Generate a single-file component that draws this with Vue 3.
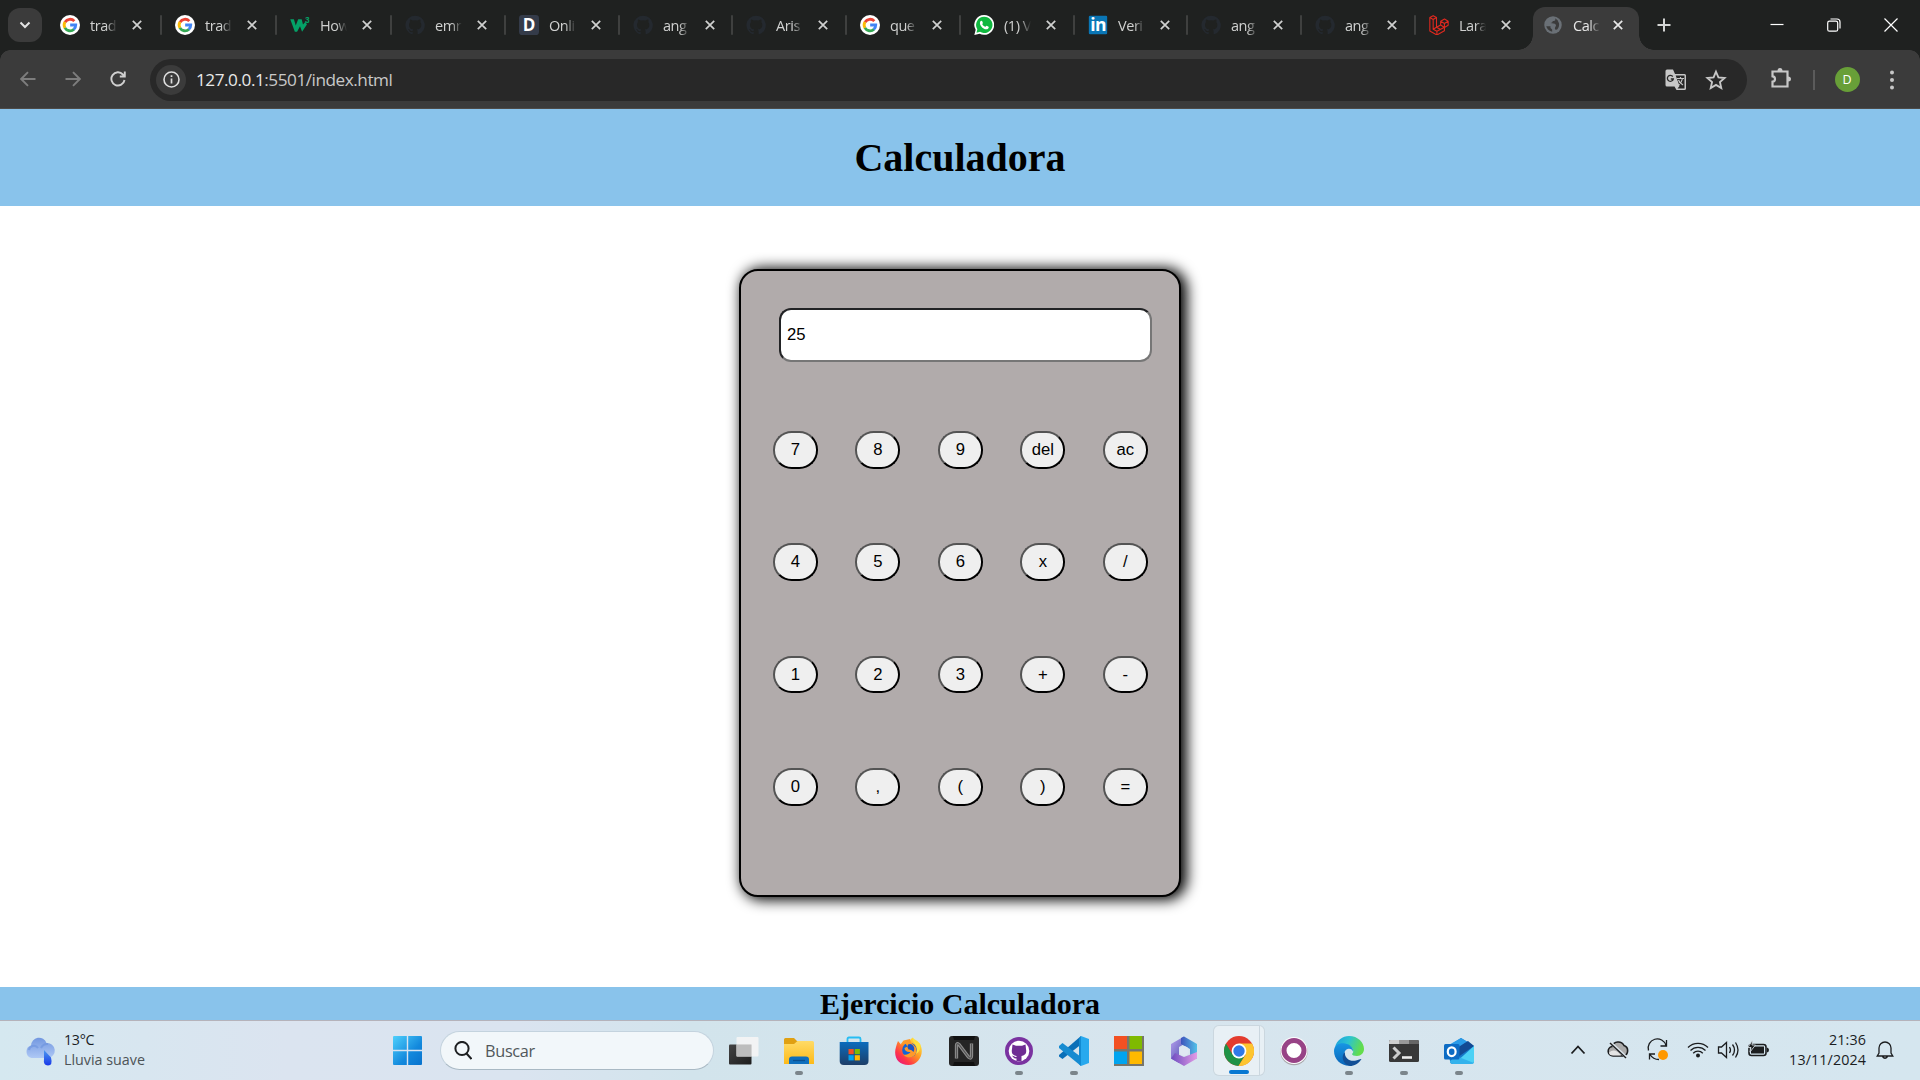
<script setup>
const g = `<circle cx="12" cy="12" r="12" fill="#fff"/><g fill="none" stroke-width="3.4"><path d="M17.2 7.4A7 7 0 0 0 6 8.6" stroke="#ea4335"/><path d="M6 8.4a7 7 0 0 0 0 7.2" stroke="#fbbc05"/><path d="M5.9 15.4a7 7 0 0 0 10.9 1.7" stroke="#34a853"/><path d="M12.2 12h6.7a7 7 0 0 1-2.4 5.3" stroke="#4285f4"/></g>`
const gh = `<path fill="#24292f" d="M12 .8a11.5 11.5 0 0 0-3.6 22.4c.6.1.8-.2.8-.6v-2.1c-3.2.7-3.9-1.4-3.9-1.4-.5-1.3-1.3-1.7-1.3-1.7-1-.7.1-.7.1-.7 1.2.1 1.8 1.2 1.8 1.2 1 1.8 2.7 1.3 3.4 1 .1-.8.4-1.3.7-1.6-2.5-.3-5.2-1.3-5.2-5.7 0-1.3.5-2.3 1.2-3.1-.1-.3-.5-1.5.1-3.1 0 0 1-.3 3.2 1.2a11 11 0 0 1 5.8 0c2.2-1.5 3.2-1.2 3.2-1.2.6 1.6.2 2.8.1 3.1.7.8 1.2 1.8 1.2 3.1 0 4.4-2.7 5.4-5.3 5.7.4.4.8 1.1.8 2.1v3.2c0 .4.2.7.8.6A11.5 11.5 0 0 0 12 .8z"/>`
const icons = {
  google: g,
  github: gh,
  w3: `<path d="M.3 5h4.400l2.200 7.500L9.800 5h4.200l1.600 6.500L18.500 8l1.800 3.500-5.800 8.500-2.500-6.500L8.500 20H5.800z" fill="#04a167"/><text x="18" y="9.500" font-size="10" font-weight="700" fill="#04a167" font-family="Liberation Sans, sans-serif">3</text>`,
  doc: `<rect width="24" height="24" rx="4" fill="#343b49"/><text x="12" y="19.3" font-size="20.5" font-weight="700" text-anchor="middle" fill="#fff" font-family="Open Sans, sans-serif">D</text>`,
  whatsapp: `<path d="M12.2 0A11.8 11.8 0 0 0 2 17.8L.4 24l6.3-1.6A11.9 11.9 0 1 0 12.2 0z" fill="#fff"/><path d="M12.2 2.2A9.7 9.7 0 0 0 4 17l-1 4.2 4.3-1.1A9.7 9.7 0 1 0 12.2 2.2z" fill="#10b83f"/><path d="M7.5 7.7c1-1.6 2.2-.8 2.4-.2l.7 1.8c.2.8-.9 1.4-.7 1.9a7 7 0 0 0 3.4 3c.7.2 1.3-1.5 2-1.2l2.2 1.1c.5.4.1 2.3-1.5 2.9-4.2 1.5-10.7-5.3-8.5-9.3z" fill="#fff"/>`,
  linkedin: `<rect x="1" y="1" width="22" height="22" rx="1.5" fill="#0a76b5"/><text x="12" y="19.3" font-size="21" font-weight="700" text-anchor="middle" fill="#fff" font-family="Open Sans, sans-serif" letter-spacing="-.8">in</text>`,
  laravel: `<path d="M1 3l4-2.2L9 3v11.8l5-2.8V7.5l4.6-2.7L23 7.4v5l-4.5 2.6v4L9.5 24 1 19.2zM1 3l4 2.4L9 3M5 5.4v11.8l4.5 2.4 9-4.9M14 7.5l4.5 2.6L23 7.4M18.5 10.1V15L14 12M5 17.2l4-2.4M9.5 19.6V24M14 12l-5 2.8 5 2.7" fill="none" stroke="#e1291f" stroke-width="1.3" stroke-linejoin="round"/>`,
  globe: `<circle cx="12" cy="12" r="10.5" fill="#6a7076"/><path d="M3.7 11.5A8.5 8.5 0 0 0 11 20v-2.5l-2-2v-2H4zM14.5 3.9c1 2.6-.2 3.4-2.8 3.4-.2 2-1.3 1.8-2.6 2.2 2 .7 5.2.1 6.3 2.1.8 1.5-1.2 2.6-1.1 4.8.3 1.3 1.8 1.4 3 .8A8.5 8.5 0 0 0 14.5 4z" fill="#3b3b3b"/>`,
}
const tabs = [
  ['google', 'trad', 115], ['google', 'trad', 115], ['w3', 'How', 115], ['github', 'emr', 114], ['doc', 'Onli', 114],
  ['github', 'ang', 113], ['github', 'Aris', 114], ['google', 'que', 114], ['whatsapp', '(1) V', 114], ['linkedin', 'Veri', 113],
  ['github', 'ang', 114], ['github', 'ang', 114], ['laravel', 'Lara', 117],
]
const keys = ['7', '8', '9', 'del', 'ac', '4', '5', '6', 'x', '/', '1', '2', '3', '+', '-', '0', ',', '(', ')', '=']
const apps = [
  { svg: `<defs><linearGradient id="tv" x2="1" y2="1"><stop stop-color="#444"/><stop offset="1" stop-color="#1d1d1d"/></linearGradient></defs><rect y="8.5" width="22.5" height="20" rx="1" fill="url(#tv)"/><rect x="7.5" y="1" width="22" height="19.5" rx="1" fill="#f4f4f4" opacity=".93"/><rect x="7.5" y="8.5" width="15" height="12" fill="#bdbdbd"/>` },
  { dot: 1, svg: `<defs><linearGradient id="fe" x2="0" y2="1"><stop stop-color="#ffdb67"/><stop offset="1" stop-color="#fdba18"/></linearGradient></defs><path d="M0 3.5Q0 2 1.500 2H10l3 3h15v6H0z" fill="#e0a012"/><path d="M0 8h10l3.500-3H28.500Q30 5 30 6.500V28H0z" fill="url(#fe)"/><path d="M5 28v-4.500q0-3 3-3h14q3 0 3 3V28z" fill="#0f6fbd"/><path d="M9 24.500h12" stroke="#0a4f90" stroke-width="1.300"/>` },
  { svg: `<defs><linearGradient id="st" x2="0" y2="1"><stop stop-color="#0b6cbd"/><stop offset="1" stop-color="#1d3e68"/></linearGradient></defs><path d="M8.500 6V3q0-1.500 1.500-1.500h10q1.500 0 1.500 1.500v3" fill="none" stroke="#27bdf3" stroke-width="1.800"/><path d="M.7 6h28.800v19q0 4-4 4H4.700q-4 0-4-4z" fill="url(#st)"/><path d="M9.500 13h5.200v5.200H9.500z" fill="#f25022"/><path d="M15.700 13h5.200v5.200h-5.200z" fill="#7fba00"/><path d="M9.500 19.200h5.200v5.200H9.500z" fill="#00a4ef"/><path d="M15.700 19.200h5.200v5.200h-5.200z" fill="#ffb900"/>` },
  { svg: `<defs><linearGradient id="ff" x1="1" x2=".1" y2="1"><stop offset=".1" stop-color="#fff044"/><stop offset=".45" stop-color="#ff9722"/><stop offset=".75" stop-color="#ff3647"/><stop offset="1" stop-color="#e31587"/></linearGradient></defs><path d="M4 5l3 3.500C9 6 12 4.500 15 5l3.500-3.500C20 4 24 4 26 8c5 9-1 21-11.500 21S-1 21 2 11c.5-2 1.200-4 2-6z" fill="url(#ff)"/><circle cx="15.500" cy="14" r="7.300" fill="#1265d8"/><path d="M16 3c0 5 7 6 6.500 12-1 7-9 8.500-13.500 3.500 4 1 6.500-1 7.500-2.500-3 .5-6-1-6-4l3-1.500-2-3-5 1 3-4z" fill="#ff9a2a"/><path d="M14 8.500q3-1 4.500.5 3 3 1 7-2-3-5-2.500-2-2.500-.5-5z" fill="#1a54c4"/><path d="M19 1.500c-1.500 4 3.500 6.500 4 11 .2 2-.3 4-1 5.500 4-2 5-7 4-10.500-1.300 0-5.500-1-7-6z" fill="#ffe23d"/>` },
  { svg: `<rect width="30" height="30" rx="3" fill="#252525"/><path d="M4 0h22l-1 4H5zM4 30h22l-1-4H5z" fill="#111"/><path d="M7.500 22.500V9.500q0-3 2.500-1l9.500 12.500q3 2.500 3-1V7.500" fill="none" stroke="#8f8f8f" stroke-width="3.300"/><path d="M7.500 22.500V9.500q0-3 2.500-1l9.500 12.500q3 2.500 3-1V7.500" fill="none" stroke="#555" stroke-width="1.200"/>` },
  { dot: 1, svg: `<circle cx="15" cy="15" r="14" fill="#7a32a0"/><circle cx="15" cy="15" r="10.300" fill="#fff"/><path d="M8.500 8.500l3.500 1.300h6l3.500-1.300.5 4.500c1 5-1.500 6.500-4.500 7V25h-5v-2.500c-3 .5-3-2-4.500-2.500 1.500-.7 2.500 1.500 4.500 1V20c-3-.5-5.500-2-4.500-7z" fill="#6f2c93"/>` },
  { dot: 1, svg: `<path d="M22 0l8 3v24l-8 3z" fill="#28a9ee"/><path d="M22 0v8.500L3.500 23 0 20.500v-1.500z" fill="#0a6fb8"/><path d="M0 10l3.500-3L22 21v9L0 12z" fill="#168bd1"/><path d="M22 0v30l-2-2V3z" fill="#128bd3"/>` },
  { svg: `<rect width="30" height="30" fill="#77756a"/><path d="M0 0h13v13H0z" fill="#f25022"/><path d="M15.500 0H28v13H15.500z" fill="#7fba00"/><path d="M0 15.500h13V28H0z" fill="#00a4ef"/><path d="M15.500 15.500H28V28H15.500z" fill="#ffb900"/>` },
  { svg: `<defs><linearGradient id="mA" x2="1" y2="1"><stop stop-color="#b9a2ef"/><stop offset="1" stop-color="#4046a8"/></linearGradient><linearGradient id="mB" x2="1"><stop stop-color="#3e53bd"/><stop offset="1" stop-color="#54c1e8"/></linearGradient><linearGradient id="mC" x2="1"><stop stop-color="#6d4cc0"/><stop offset="1" stop-color="#e39be6"/></linearGradient></defs><path d="M15 .5L2 8v14.500l8 4.500v-16l8-4.500z" fill="url(#mA)"/><path d="M12 2l3-1.500L28 8v15l-7-4v-6l-9-5z" fill="url(#mB)"/><path d="M28 16v6.500L15 30 2 22.500 6 17l9 4z" fill="url(#mC)"/><circle cx="15" cy="15" r="4.800" fill="#e0e7f2"/>` },
  { active: 1, svg: `<circle cx="15" cy="15" r="15" fill="#e33b2e"/><path d="M2 7.500A15 15 0 0 0 14.500 30l7-11.500-6.500-3.500-6.500 3.500z" fill="#1f9246"/><path d="M28 7.500H15L21.500 18.700 14.500 30A15 15 0 0 0 28 7.500z" fill="#fdc52f"/><circle cx="15" cy="15" r="7.400" fill="#fff"/><circle cx="15" cy="15" r="5.700" fill="#3079e8"/>` },
  { svg: `<circle cx="15" cy="15.500" r="13.700" fill="#a9a7ab"/><circle cx="15" cy="14.500" r="13.500" fill="#fff"/><circle cx="15" cy="14.500" r="10" fill="#fff" stroke="#984386" stroke-width="5"/>` },
  { dot: 1, svg: `<defs><linearGradient id="eA" x2="1" y2=".3"><stop stop-color="#1a9de0"/><stop offset=".5" stop-color="#2cc3d0"/><stop offset="1" stop-color="#63dd4c"/></linearGradient><linearGradient id="eB" x2="0" y2="1"><stop stop-color="#1796e4"/><stop offset="1" stop-color="#0a64b8"/></linearGradient></defs><path d="M1 11C3 4 8.500 0 15 0c9 0 15 6.500 15 13 0 4-3 7-7 7-3 0-5-1-5-2 1-1 1.500-2 1-4C18 9 8 7 1 11z" fill="url(#eA)"/><path d="M0 15C0 9 6 6.500 11 7.500c6 1 8.500 5 8 8-.5-2-3-3.500-5.500-2.500-5 2-5 11 4.500 16.500C8 31 0 24 0 15z" fill="url(#eB)"/><path d="M11 16c-1 6 5 10 11 8.500 3-.7 4.500-2 5.500-1.500C25 27.500 20 30 16 30 8 28 7 19 11 16z" fill="#124f96"/>` },
  { dot: 1, svg: `<rect y="4" width="30" height="22" rx="1.500" fill="#383838"/><path d="M0 8V5.500Q0 4 1.500 4H10v4z" fill="#ccc"/><path d="M10 4h10v4H10z" fill="#999"/><path d="M20 4h8.500Q30 4 30 5.500V8H20z" fill="#666"/><path d="M4.500 11.500l5.500 5.500-5.500 5.500" fill="none" stroke="#ccc" stroke-width="3"/><path d="M13 21.500h10" stroke="#eee" stroke-width="2.600"/>` },
  { dot: 1, svg: `<path d="M3 11L17 2l13 8v15q0 3-3 3H9q-3 0-3-3z" fill="#1678c8"/><path d="M12 11l12-6 6 5-16 11z" fill="#124a94"/><path d="M3 10l14-8 6 3.500L10 14z" fill="#2a9be8"/><path d="M30 10v15q0 3-3 3H10z" fill="#4cd1f5"/><path d="M12 20l18 7-3 1H9q-3 0-3-3z" fill="#33b2ec"/><rect y="8" width="15.500" height="15.500" rx="1.500" fill="#0d6cc4"/><ellipse cx="7.700" cy="15.700" rx="3.900" ry="4.400" fill="none" stroke="#fff" stroke-width="2.200"/>` },
]
</script>

<template>
  <div class="screen">
    <div class="tabstrip">
      <button class="search-tabs"><svg width="12" height="8" viewBox="0 0 12 8"><path d="M1.500 1.500L6 6l4.500-4.500" fill="none" stroke="#e3e3e3" stroke-width="2" /></svg></button>
      <div class="tabs">
        <div v-for="(t, i) in tabs" :key="i" class="tab" :class="{ last: i === 12 }" :style="{ width: t[2] + 'px' }">
          <svg class="fav" viewBox="0 0 24 24" v-html="icons[t[0]]"></svg>
          <span class="tab-title">{{ t[1] }}</span>
          <svg class="close" viewBox="0 0 10 10"><path d="M.8.8l8.400 8.400M9.200.8L.8 9.200" /></svg>
        </div>
        <div class="tab current">
          <svg class="fav" viewBox="0 0 24 24" v-html="icons.globe"></svg>
          <span class="tab-title">Calc</span>
          <svg class="close" viewBox="0 0 10 10"><path d="M.8.8l8.400 8.400M9.200.8L.8 9.200" /></svg>
        </div>
      </div>
      <svg class="plus" viewBox="0 0 14 14"><path d="M7 0.500v13M.5 7h13" stroke="#d4d5d4" stroke-width="2" /></svg>
      <div class="window-controls">
        <svg width="14" height="14" viewBox="0 0 14 14"><path d="M.5 6.500h13" /></svg>
        <svg width="14" height="14" viewBox="0 0 14 14"><rect x=".7" y="3.200" width="10" height="10" rx="1.800" /><path d="M3.500 1h6.500q3 0 3 3v6.500" /></svg>
        <svg width="14" height="14" viewBox="0 0 14 14"><path d="M.5.5l13 13M13.500.5l-13 13" /></svg>
      </div>
    </div>

    <div class="toolbar">
      <svg class="nav dim" viewBox="0 0 16 16"><path d="M15.500 8H1.500M8 1.200L1.200 8 8 14.800" /></svg>
      <svg class="nav dim" viewBox="0 0 16 16"><path d="M.5 8h14M8 1.200L14.800 8 8 14.800" /></svg>
      <svg class="nav" viewBox="0 0 16 16"><path d="M14.500 9A6.600 6.600 0 1 1 12.900 3.500L14 5M14.800.5V5.500H9.800" /></svg>
      <div class="omnibox">
        <span class="info"><svg width="17" height="17" viewBox="0 0 17 17"><circle cx="8.500" cy="8.500" r="7.500" fill="none" stroke="#dedede" stroke-width="1.600" /><path d="M8.500 7.500v5M8.500 4.200v1.900" stroke="#dedede" stroke-width="1.700" /></svg></span>
        <span class="url">127.0.0.1<span>:5501/index.html</span></span>
        <svg class="translate" viewBox="0 0 22 22">
          <path d="M2 .5h6l2 4.500h9.500q1.500 0 1.500 1.500v13q0 1.500-1.500 1.500h-8l-2-3.500H2Q.5 17.500.5 16V2Q.5.500 2 .5z" fill="#c7c7c7" />
          <path d="M10.700 6.500h8.800v13h-7l2-2.500z" fill="#282828" />
          <path d="M7.800 7.500A3 3 0 1 0 8.300 10H5.800" fill="none" stroke="#282828" stroke-width="1.300" />
          <path d="M12 9.500h7M15.500 8v1.500M17.500 9.500q-.8 4-4 6.500M13.500 11q1 3 4.500 5" fill="none" stroke="#c7c7c7" stroke-width="1.200" />
        </svg>
        <svg class="star" viewBox="0 0 20 20"><path d="M10 2.500l2.200 5.200 5.600.5-4.200 3.700 1.200 5.500-4.800-2.900-4.800 2.900 1.200-5.500L2.200 8.200l5.600-.5z" /></svg>
      </div>
      <svg class="puzzle" viewBox="0 0 22 22"><path d="M2.500 4.500h15v15h-15v-4.800Q5 14.500 5 12T2.500 9.300z" /><path d="M7.500 4q0-3 2.500-3t2.500 3zM18 9.500q3 0 3 2.500t-3 2.500z" fill="#c7c7c7" stroke="none" /></svg>
      <i class="divider"></i>
      <span class="avatar">D</span>
      <svg class="dots" viewBox="0 0 6 20"><circle cx="3" cy="2.500" r="2" /><circle cx="3" cy="10" r="2" /><circle cx="3" cy="17.500" r="2" /></svg>
    </div>

    <header><h1>Calculadora</h1></header>
    <main>
      <section class="calculator">
        <input class="display" type="text" value="25" />
        <div class="keys"><button v-for="k in keys" :key="k">{{ k }}</button></div>
      </section>
    </main>
    <footer><h2>Ejercicio Calculadora</h2></footer>

    <div class="taskbar">
      <div class="weather">
        <svg width="32" height="34" viewBox="0 0 32 34">
          <defs><linearGradient id="cl" x2="0" y2="1"><stop stop-color="#7297e0" /><stop offset="1" stop-color="#aec8f5" /></linearGradient><linearGradient id="dr" x2="0" y2="1"><stop stop-color="#4c9aef" /><stop offset="1" stop-color="#1837e8" /></linearGradient></defs>
          <path d="M7.500 24A6.500 6.500 0 0 1 7 11.500 8 8 0 0 1 22.500 9a7.500 7.500 0 0 1 1.500 15z" fill="url(#cl)" />
          <path d="M5 16a5 5 0 0 1 9-2M17 14a7 7 0 0 1 7-4" fill="none" stroke="#668edb" stroke-width="2" opacity=".5" />
          <path d="M20 16l7 7.500q2 8-3 8t-4-7z" fill="url(#dr)" />
        </svg>
        <div><p>13°C</p><p class="sub">Lluvia suave</p></div>
      </div>
      <svg class="start" viewBox="0 0 29 29"><defs><linearGradient id="wn" x2="1" y2="1"><stop stop-color="#4fd0fc" /><stop offset=".6" stop-color="#1389dd" /><stop offset="1" stop-color="#0872cd" /></linearGradient></defs><path d="M1 0h12.800v13.800H0V1q0-1 1-1zM15.200 0H28q1 0 1 1v12.800H15.200zM0 15.200h13.800V29H1q-1 0-1-1zM15.200 15.200H29V28q0 1-1 1H15.200z" fill="url(#wn)" /></svg>
      <div class="search"><svg width="18" height="19" viewBox="0 0 18 19"><circle cx="8" cy="7.500" r="6.600" /><path d="M12.500 12.500l5 5.500" /></svg><span>Buscar</span></div>
      <div class="apps">
        <div v-for="(a, i) in apps" :key="i" class="app" :class="{ active: a.active, open: a.dot }"><svg viewBox="0 0 30 30" v-html="a.svg"></svg></div>
      </div>
      <div class="tray">
        <svg width="40" height="30" viewBox="0 0 40 30"><path d="M13.500 18.500l6.500-7 6.500 7" stroke-width="1.800" /></svg>
        <svg width="40" height="30" viewBox="0 0 40 30"><path d="M15 21a4.800 4.800 0 0 1-1-9.500 6.500 6.500 0 0 1 12-1 5.500 5.500 0 0 1-.5 10.500z" fill="#aaa" stroke-width="1.600" /><path d="M11 17.500q6-5 12 3h-8q-4 0-4-3z" fill="#e4e4e4" stroke="none" /><path d="M12.500 7.500l16 15" stroke="#dbe5ec" stroke-width="3" /><path d="M12 8l16 15" stroke-width="1.400" /></svg>
        <svg width="40" height="30" viewBox="0 0 40 30"><path d="M10.500 15.500A9 9 0 0 1 28 10.500M28.500 5v6h-6M21 24.500q-6 0-9-5M11.500 24.500v-5.500h5.500" /><circle cx="25" cy="20" r="5" fill="#ff9800" stroke="none" /></svg>
        <svg width="40" height="30" viewBox="0 0 40 30"><path d="M10 12.500a14 14 0 0 1 20 0M12.500 15.500a10.500 10.500 0 0 1 15 0M15.200 18.200a6.700 6.700 0 0 1 9.600 0" /><circle cx="20" cy="20.500" r="2" fill="#1b1d1f" stroke="none" /></svg>
        <svg class="volume" width="30" height="30" viewBox="0 0 30 30"><path d="M5.500 12h3l5-4.500v15L8.500 18h-3zM16.500 12q2 3 0 6M19.500 9.500q4 5.500 0 11M22.500 7.500q5 7.500 0 15" /></svg>
        <svg width="30" height="30" viewBox="0 0 30 30"><rect x="6" y="9.500" width="17" height="11" rx="2.500" stroke-width="1.600" /><path d="M11 11.500h10v7H8v-3z" fill="#1b1d1f" stroke="none" /><path d="M24 12.500q2 .5 2 2.500t-2 2.500z" fill="#1b1d1f" stroke="none" /><path d="M9.500 5L5 12.500h3L7 17l5.500-7H9z" fill="#1b1d1f" stroke="#dbe5ec" stroke-width=".8" /></svg>
      </div>
      <div class="clock"><p>21:36</p><p>13/11/2024</p></div>
      <svg class="bell" viewBox="0 0 18 20"><path d="M3 13V8a6 6 0 0 1 12 0v5l1.800 3H1.200zM6.500 16.500q2.500 3.500 5 0" /></svg>
    </div>
  </div>
</template>

<style>
body { margin: 0; overflow: hidden; }
</style>

<style scoped>
* { box-sizing: border-box; }
p, h1, h2 { margin: 0; }
svg { display: block; flex: none; }
.screen { width: 1920px; height: 1080px; display: flex; flex-direction: column; background: #fff; font-family: "Open Sans", "Noto Sans", sans-serif; }

.tabstrip { height: 50px; flex: none; display: flex; align-items: center; background: #1f2120; }
.search-tabs { width: 34px; height: 34px; margin-left: 8px; padding: 0; border: 0; border-radius: 12px; background: #3b3b3b; display: grid; place-items: center; flex: none; }
.tabs { display: flex; align-items: flex-end; height: 50px; margin-left: 5px; }
.tab { position: relative; height: 50px; display: flex; align-items: center; padding-left: 13px; flex: none; }
.tab::after { content: ""; position: absolute; right: 0; top: 15px; width: 2px; height: 20px; border-radius: 1px; background: #3f403f; }
.tab.last::after, .tab.current::after { display: none; }
.fav { width: 20px; height: 20px; }
.tab-title { width: 27px; margin-left: 10px; white-space: nowrap; font-size: 14.5px; letter-spacing: -.45px; color: #d0d1d0; -webkit-mask-image: linear-gradient(90deg, #000 60%, transparent); mask-image: linear-gradient(90deg, #000 60%, transparent); }
.close { width: 10px; height: 10px; margin-left: 14.500px; stroke: #d0d1d0; stroke-width: 1.700; fill: none; }
.tab.current { width: 106px; height: 43px; padding: 0 0 7px 10px; background: #3b3b3b; border-radius: 12px 12px 0 0; }
.tab.current::before { content: ""; position: absolute; bottom: 0; left: -15px; right: -15px; height: 15px; background: radial-gradient(circle at 0 0, transparent 14.500px, #3b3b3b 15px) left / 15px 15px no-repeat, radial-gradient(circle at 100% 0, transparent 14.500px, #3b3b3b 15px) right / 15px 15px no-repeat; }
.tab.current .tab-title { color: #e8e8e8; }
.tab.current .close { margin-left: 13px; stroke: #e8e8e8; }
.plus { width: 14px; height: 14px; margin-left: 17.500px; }
.window-controls { display: flex; gap: 43px; margin-left: auto; padding-right: 22px; }
.window-controls svg { stroke: #fff; stroke-width: 1.200; fill: none; }

.toolbar { height: 59px; flex: none; display: flex; align-items: center; background: linear-gradient(#3b3b3b, #3b3b3b) 0 0 / 100% 58px no-repeat #4d4b49; position: relative; }
.toolbar::before, .toolbar::after { content: ""; position: absolute; top: 0; left: 0; width: 10px; height: 10px; background: radial-gradient(circle at 100% 100%, transparent 9.500px, #1f2120 10px); }
.toolbar::after { left: auto; right: 0; background: radial-gradient(circle at 0 100%, transparent 9.500px, #1f2120 10px); }
.nav { width: 16px; height: 16px; margin: 0 29px 1px 0; fill: none; stroke: #d0d0d0; stroke-width: 1.900; }
.nav:first-child { margin-left: 19.500px; }
.nav.dim { stroke: #7d7d7d; }
.omnibox { width: 1597px; height: 42px; margin-left: -4.500px; border-radius: 21px; background: #282828; display: flex; align-items: center; padding: 0 20px 0 6px; }
.info { width: 30px; height: 30px; border-radius: 50%; background: #3b3b3b; display: grid; place-items: center; }
.url { margin: -1px 0 0 10px; font-size: 17.200px; letter-spacing: -.47px; color: #e8e8e8; white-space: nowrap; }
.url span { color: #c9c9c9; }
.translate { width: 22px; height: 22px; margin-left: auto; }
.star { width: 22px; height: 22px; margin-left: 18px; fill: none; stroke: #c7c7c7; stroke-width: 1.700; }
.puzzle { width: 22px; height: 22px; margin: -3px 0 0 23px; fill: none; stroke: #c7c7c7; stroke-width: 2.200; }
.divider { width: 2px; height: 20px; margin-left: 21px; background: #5b5b5b; }
.avatar { width: 25px; height: 25px; margin: -1px 0 0 19.500px; border-radius: 50%; background: #689f38; color: #fff; font-size: 12.500px; display: grid; place-items: center; }
.dots { width: 6px; height: 20px; margin-left: 29px; fill: #c7c7c7; }

header { height: 97px; flex: none; display: grid; place-items: center; background: #89c3eb; }
h1, h2 { font-family: "Liberation Serif", "Times New Roman", serif; font-weight: 700; color: #000; }
h1 { font-size: 40px; line-height: 46px; }
main { height: 781px; flex: none; display: flex; justify-content: center; align-items: flex-start; padding-top: 63px; }
.calculator { width: 442px; height: 628px; border: 2px solid #000; border-radius: 19px; background: #b1abab; box-shadow: 4px 1px 14px 2px #000; padding: 37px 27px 0 32px; }
.display { display: block; width: 373px; height: 54px; margin-left: 6px; padding: 0 6px; border: 2px solid; border-color: #222325 #767676 #767676 #222325; border-radius: 12px; background: #fff; color: #000; outline: none; font: 16.670px "Liberation Sans", Arial, sans-serif; }
.keys { display: grid; grid-template-columns: repeat(5, 45px); grid-auto-rows: 37.500px; column-gap: 37.500px; row-gap: 74.900px; margin: 69px 0 0 -.2px; }
.keys button { padding: 0; border: 2px outset #000; border-radius: 18.750px; background: #efefef; color: #000; font: 16.670px "Liberation Sans", Arial, sans-serif; }
footer { height: 34px; flex: none; background: #89c3eb; border-bottom: 1px solid #b5b3bb; text-align: center; }
h2 { font-size: 30px; line-height: 34px; }

.taskbar { height: 59px; flex: none; display: flex; align-items: center; background: linear-gradient(90deg, #d5e8f0 0, #dbe4f0 15%, #dae4f0 27%, #d2e4ec 36%, #d7e5ee 60%, #d5e6ef 100%); color: #1b1d1f; }
.weather { width: 393px; display: flex; align-items: center; padding-left: 24px; }
.weather > div { margin: -2px 0 0 8px; }
.weather p, .clock p { font-size: 14.300px; line-height: 20px; letter-spacing: -.3px; white-space: nowrap; }
.weather .sub { color: #4d5357; letter-spacing: 0; }
.start { width: 29px; height: 29px; }
.search { width: 274px; height: 39px; margin-left: 17.500px; border: 1px solid #c4d3de; border-bottom-color: #a9b9c4; border-radius: 20px; background: #f2f7fa; display: flex; align-items: center; padding-left: 13px; }
.search svg { fill: none; stroke: #1d1f21; stroke-width: 2; }
.search span { margin: 0 0 0 13.500px; font-size: 16.300px; letter-spacing: -.3px; color: #51575b; }
.apps { display: flex; align-items: center; gap: 5px; margin-left: 5.500px; }
.app { position: relative; width: 50px; height: 50px; display: grid; place-items: center; }
.app svg { width: 30px; height: 30px; }
.app.active { height: 49px; border-radius: 5px; background: #e8f0f5; box-shadow: 0 0 0 1px #cbd7df; }
.app.active svg { margin-left: -1px; }
.app.active::before { content: ""; position: absolute; top: 0; bottom: 0; right: 4px; width: 1px; background: #cbd7df; }
.app.open::after, .app.active::after { content: ""; position: absolute; bottom: 1px; left: 21px; width: 8px; height: 4px; border-radius: 2px; background: #7b858b; }
.app.active::after { left: 15px; width: 20px; background: #0878d2; }
.tray { display: flex; margin: -1px 0 0 auto; }
.tray svg, .bell { fill: none; stroke: #1b1d1f; stroke-width: 1.300; }
.tray .volume { margin-left: -5px; }
.clock { width: 93px; margin-top: -2px; text-align: right; }
.clock p { letter-spacing: .1px; }
.bell { width: 18px; height: 20px; margin: -1px 26px 0 10px; }
</style>
